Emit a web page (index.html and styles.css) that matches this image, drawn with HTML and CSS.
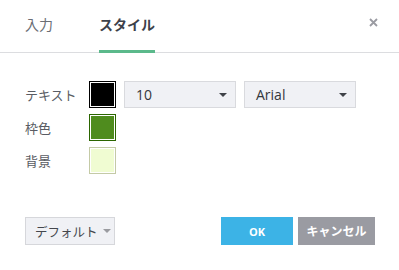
FILE: index.html
```html
<!DOCTYPE html>
<html lang="ja">

<head>
    <meta charset="UTF-8">
    <title>スタイル</title>
    <link rel="stylesheet" href="styles.css">
</head>

<body>
    <div class="dialog">
        <div class="tabs">
            <div class="tab">入力</div>
            <div class="tab active">スタイル</div>
            <div class="close">
                <svg width="9" height="9" viewBox="0 0 9 9">
                    <path d="M1 1L8 8M8 1L1 8" stroke="#9a9ba2" stroke-width="1.8" fill="none"/>
                </svg>
            </div>
        </div>

        <div class="content">
            <div class="row">
                <span class="label">テキスト</span>
                <span class="swatch swatch-text"></span>
                <div class="select">10<span class="caret"></span></div>
                <div class="select">Arial<span class="caret"></span></div>
            </div>
            <div class="row">
                <span class="label">枠色</span>
                <span class="swatch swatch-border"></span>
            </div>
            <div class="row">
                <span class="label">背景</span>
                <span class="swatch swatch-bg"></span>
            </div>
        </div>

        <div class="footer">
            <button class="btn-default">デフォルト<span class="caret"></span></button>
            <div class="actions">
                <button class="btn-ok">OK</button>
                <button class="btn-cancel">キャンセル</button>
            </div>
        </div>
    </div>
</body>

</html>
```

FILE: styles.css
```css
body {
    margin: 0;
    font-family: "Open Sans", "Noto Sans CJK JP", sans-serif;
    background: #fff;
}

.dialog {
    width: 399px;
    height: 270px;
}

.tabs {
    display: flex;
    height: 52px;
    padding-left: 25px;
    border-bottom: 1px solid #dcdde0;
    gap: 46px;
}

.tab {
    height: 50px;
    line-height: 50px;
    font-size: 14px;
    color: #6b6e75;
    border-bottom: 3px solid transparent;
    margin-bottom: -1px;
}

.tab.active {
    color: #3d414a;
    font-weight: bold;
    border-bottom-color: #5bb98b;
}

.close {
    margin-left: auto;
    margin-right: 21px;
    margin-top: 18px;
    width: 9px;
    height: 9px;
}

.close svg {
    display: block;
}

.content {
    padding: 28px 0 0 25px;
    display: flex;
    flex-direction: column;
    gap: 6px;
}

.row {
    display: flex;
    align-items: center;
    height: 27px;
}

.label {
    width: 64px;
    font-size: 13px;
    color: #595c63;
}

.swatch {
    width: 25px;
    height: 25px;
    border: 1px solid;
    box-shadow: inset 0 0 0 1px #fff;
}

.swatch-text {
    background: #000;
    border-color: #000;
}

.swatch-border {
    background: #4f8c1e;
    border-color: #2b6500;
}

.swatch-bg {
    background: #f0fcd2;
    border-color: #c4caa6;
}

.select {
    display: flex;
    align-items: center;
    width: 99px;
    height: 25px;
    margin-left: 8px;
    padding-left: 11px;
    border: 1px solid #d9dade;
    background: #f0f1f5;
    font-size: 14px;
    color: #33363c;
}

.caret {
    flex-shrink: 0;
    margin-left: auto;
    margin-right: 8px;
    width: 0;
    height: 0;
    border-left: 4px solid transparent;
    border-right: 4px solid transparent;
    border-top: 4px solid #3f4248;
}

.footer {
    display: flex;
    justify-content: space-between;
    padding: 43px 24px 0 25px;
}

button {
    height: 28px;
    border: none;
    font-family: "Open Sans", "Noto Sans CJK JP", sans-serif;
    cursor: pointer;
    padding: 0;
    white-space: nowrap;
}

.btn-default {
    display: flex;
    align-items: center;
    width: 90px;
    padding-left: 9px;
    border: 1px solid #d6d7db;
    background: #f0f1f5;
    font-size: 12.5px;
    color: #44474d;
}

.btn-default .caret {
    margin-left: 5px;
    margin-right: 0;
    border-top-color: #9a9ba0;
}

.actions {
    display: flex;
    gap: 5px;
}

.btn-ok {
    width: 72px;
    background: #3cb3e6;
    color: #fff;
    font-weight: bold;
    font-size: 11px;
}

.btn-cancel {
    width: 77px;
    background: #9a9ba2;
    color: #fff;
    font-weight: bold;
    font-size: 12px;
}
```
